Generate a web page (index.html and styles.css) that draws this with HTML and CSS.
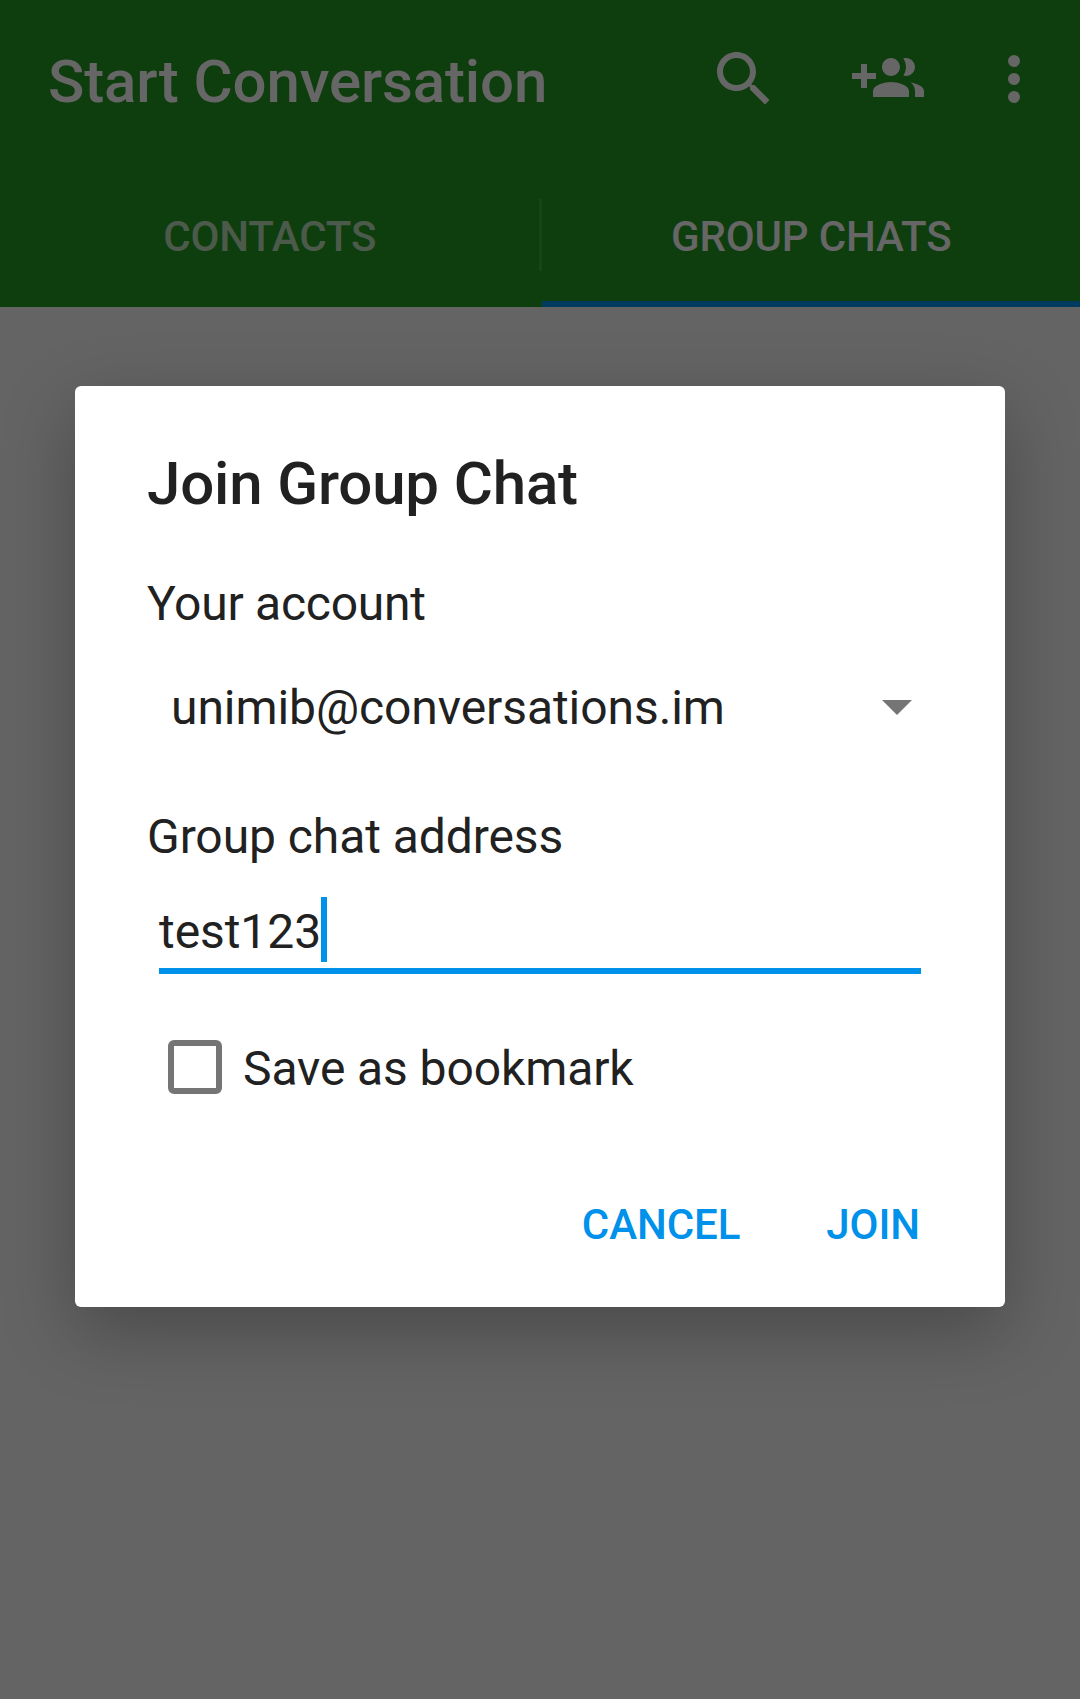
FILE: index.html
```html
<!DOCTYPE html>
<html lang="en">
<head>
<meta charset="utf-8">
<title>Start Conversation</title>
<link rel="stylesheet" href="styles.css">
</head>
<body>
<header class="app-bar">
  <div class="toolbar">
    <h1 class="toolbar-title">Start Conversation</h1>
    <svg class="icon icon-search" viewBox="0 0 24 24"><path d="M15.5 14h-.79l-.28-.27C15.41 12.59 16 11.11 16 9.5 16 5.91 13.09 3 9.5 3S3 5.91 3 9.5 5.91 16 9.5 16c1.61 0 3.09-.59 4.23-1.57l.27.28v.79l5 4.99L20.49 19l-4.99-5zm-6 0C7.01 14 5 11.99 5 9.5S7.01 5 9.5 5 14 7.01 14 9.5 11.99 14 9.5 14z"/></svg>
    <svg class="icon icon-group" viewBox="0 0 24 24"><path d="M8 10H5V7H3v3H0v2h3v3h2v-3h3v-2zm10 1c1.66 0 2.99-1.34 2.99-3S19.66 5 18 5c-.32 0-.63.05-.91.14.57.81.9 1.79.9 2.86s-.34 2.04-.9 2.86c.28.09.59.14.91.14zm-5 0c1.66 0 2.99-1.34 2.99-3S14.66 5 13 5c-1.66 0-3 1.34-3 3s1.34 3 3 3zm6.62 2.16c.83.73 1.38 1.66 1.38 2.84v2h3v-2c0-1.54-2.37-2.49-4.38-2.84zM13 13c-2 0-6 1-6 3v2h12v-2c0-2-4-3-6-3z"/></svg>
    <svg class="icon icon-more" viewBox="0 0 24 24"><circle cx="12" cy="6" r="2"/><circle cx="12" cy="12" r="2"/><circle cx="12" cy="18" r="2"/></svg>
  </div>
  <nav class="tabs">
    <span class="tab">CONTACTS</span>
    <span class="tab-divider"></span>
    <span class="tab tab-active">GROUP CHATS</span>
  </nav>
</header>
<main class="content">
  <section class="dialog">
    <h2 class="dialog-title">Join Group Chat</h2>
    <div class="label label-account">Your account</div>
    <div class="spinner">
      <span class="spinner-text">unimib@conversations.im</span>
      <svg class="spinner-arrow" viewBox="0 0 10 5"><path d="M0 0l5 5 5-5z"/></svg>
    </div>
    <div class="label label-address">Group chat address</div>
    <div class="field"><span class="field-text">test123</span><span class="caret"></span></div>
    <div class="check-row"><span class="checkbox"></span><span class="check-label">Save as bookmark</span></div>
    <div class="actions"><span>CANCEL</span><span>JOIN</span></div>
  </section>
</main>
</body>
</html>
```
FILE: styles.css
```css
* { box-sizing: border-box; }

body {
  margin: 0;
  min-height: 1699px;
  background: #646464;
  font-family: Roboto, sans-serif;
  font-size: 48px;
  letter-spacing: -0.07px;
  color: #212121;
  overflow: hidden;
}

.app-bar {
  height: 307px;
  background: #0f3e0e;
  color: #666;
}

.toolbar {
  display: flex;
  height: 163px;
  padding: 43px 30px 0 48px;
}

.toolbar-title {
  flex: 1;
  margin: 0;
  padding-top: 4px;
  font-size: 60px;
  font-weight: 500;
  line-height: 70px;
  letter-spacing: -0.13px;
}

.icon {
  width: 72px;
  height: 72px;
  fill: currentColor;
}

.icon-group { margin-left: 72px; }
.icon-more { margin-left: 54px; }

.tabs {
  display: flex;
  height: 144px;
  font-size: 42px;
  font-weight: 500;
}

.tab {
  flex: 1;
  padding: 49px 0 0 1px;
  line-height: 50px;
  letter-spacing: -0.18px;
  text-align: center;
  color: #4c5a4b;
}

.tab-active {
  color: #666;
  border-bottom: 6px solid #003a5e;
}

.tab-divider {
  width: 3px;
  height: 72px;
  margin-top: 36px;
  background: #184517;
}

.content { padding: 79px 75px 0; }

.dialog {
  height: 921px;
  padding: 63px 85px 0 72px;
  border-radius: 6px;
  background: #fff;
  box-shadow: 0 24px 72px rgba(0, 0, 0, 0.27);
}

.dialog-title {
  margin: 0;
  font-size: 60px;
  font-weight: 500;
  line-height: 70px;
  letter-spacing: -0.15px;
}

.label {
  margin-top: 57px;
  line-height: 56px;
}

.label-account { letter-spacing: -0.25px; }

.spinner {
  display: flex;
  justify-content: space-between;
  align-items: center;
  height: 56px;
  margin-top: 48px;
  padding: 0 8px 0 24px;
}

.spinner-text { padding-bottom: 2px; }

.spinner-arrow {
  width: 30px;
  height: 15px;
  margin-bottom: 1px;
  fill: #757575;
}

.label-address { margin-top: 73px; }

.field {
  display: flex;
  height: 77px;
  margin: 32px -1px 0 12px;
  padding-bottom: 6px;
  border-bottom: 6px solid #0091ea;
}

.field-text { line-height: 69px; }

.caret {
  width: 6px;
  height: 65px;
  background: #0091ea;
}

.check-row {
  display: flex;
  align-items: center;
  gap: 21px;
  height: 54px;
  margin: 66px 0 0 21px;
}

.check-label {
  padding-top: 2px;
  letter-spacing: -0.1px;
}

.checkbox {
  width: 54px;
  height: 54px;
  border: 6px solid #757575;
  border-radius: 6px;
}

.actions {
  display: flex;
  justify-content: flex-end;
  gap: 86px;
  margin-top: 106px;
  font-size: 42px;
  font-weight: 500;
  line-height: 50px;
  color: #0091ea;
}
```
